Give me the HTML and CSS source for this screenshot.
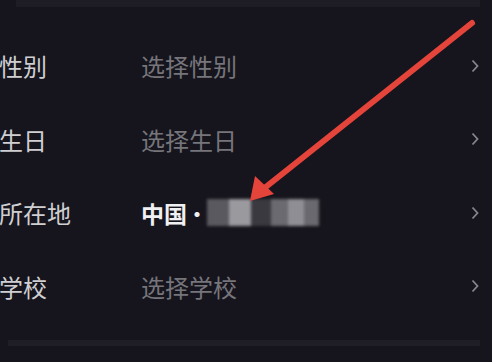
FILE: index.html
```html
<!DOCTYPE html>
<html lang="zh">
<head>
<meta charset="utf-8">
<link rel="stylesheet" href="styles.css">
</head>
<body>
<div class="page">
  <div class="top-band"></div>
  <div class="list">
    <div class="row">
      <span class="label">性别</span>
      <span class="value placeholder">选择性别</span>
      <svg class="chev" viewBox="0 0 8 14"><path d="M1.5 1.5 L6.5 7 L1.5 12.5" /></svg>
    </div>
    <div class="row">
      <span class="label">生日</span>
      <span class="value placeholder">选择生日</span>
      <svg class="chev" viewBox="0 0 8 14"><path d="M1.5 1.5 L6.5 7 L1.5 12.5" /></svg>
    </div>
    <div class="row">
      <span class="label">所在地</span>
      <span class="value filled"><b class="country">中国</b><span class="dot">·</span>
        <span class="mosaic">
          <i class="m1"></i><i class="m2"></i><i class="m3"></i><i class="m4"></i><i class="m5"></i><i class="m6"></i>
        </span>
      </span>
      <svg class="chev" viewBox="0 0 8 14"><path d="M1.5 1.5 L6.5 7 L1.5 12.5" /></svg>
    </div>
    <div class="row">
      <span class="label">学校</span>
      <span class="value placeholder">选择学校</span>
      <svg class="chev" viewBox="0 0 8 14"><path d="M1.5 1.5 L6.5 7 L1.5 12.5" /></svg>
    </div>
  </div>
  <div class="bottom-band"></div>
  <svg class="arrow" width="492" height="362" viewBox="0 0 492 362">
    <line x1="472" y1="23" x2="262" y2="190" />
    <polygon points="250,201 255,176 274,194" />
  </svg>
</div>
</body>
</html>
```
FILE: styles.css
```css
html, body {
  margin: 0;
  padding: 0;
  background: #16151d;
}
.page {
  position: relative;
  width: 492px;
  height: 362px;
  overflow: hidden;
  display: flex;
  flex-direction: column;
  font-family: "Noto Sans CJK SC", "Noto Sans", sans-serif;
}
.top-band {
  height: 7px;
  margin: 0 12px 0 16px;
  background: #1e1d26;
}
.list {
  display: flex;
  flex-direction: column;
  padding-top: 22px;
}
.row {
  height: 73.5px;
  display: flex;
  align-items: center;
}
.label {
  width: 142px;
  font-size: 24px;
  color: #cfcfd2;
  margin-left: -1px;
}
.value {
  flex: 1;
  font-size: 24px;
  display: flex;
  align-items: center;
}
.placeholder { color: #76757c; }
.filled { color: #f0f0f2; }
.country { font-weight: 700; font-size: 23px; }
.dot { font-weight: 400; margin: 0 -2px 0 -2px; }
.mosaic {
  display: flex;
  height: 27px;
  filter: blur(1.5px);
}
.mosaic i { display: block; height: 100%; }
.m1 { width: 22px; background: #5a5960; }
.m2 { width: 22px; background: #9a999e; }
.m3 { width: 20px; background: #3a3940; }
.m4 { width: 17px; background: #6b6a70; }
.m5 { width: 16px; background: #8f8e94; }
.m6 { width: 15px; background: #6a696f; }
.chev {
  width: 8px;
  height: 14px;
  margin-right: 13px;
  fill: none;
  stroke: #86858c;
  stroke-width: 1.8;
}
.bottom-band {
  height: 6px;
  margin: 17px 12px 0 8px;
  background: #1f1e27;
}
.arrow {
  position: absolute;
  left: 0;
  top: 0;
}
.arrow line {
  stroke: #e5443b;
  stroke-width: 6;
  stroke-linecap: round;
}
.arrow polygon { fill: #e5443b; }
```
